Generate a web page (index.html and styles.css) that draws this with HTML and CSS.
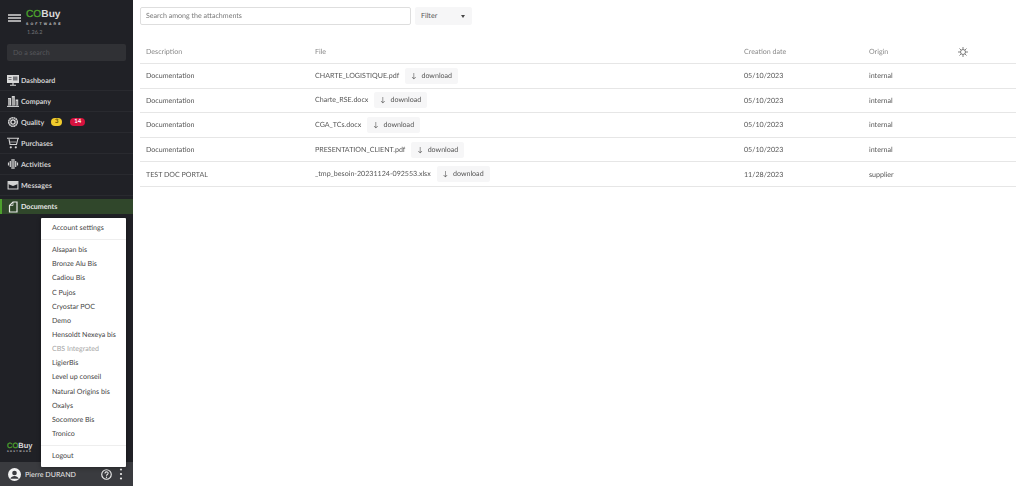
FILE: index.html
```html
<!DOCTYPE html>
<html lang="en">
<head>
    <meta charset="UTF-8">
    <meta name="viewport" content="width=device-width, initial-scale=1.0">
    <title>Documents</title>
    <link rel="stylesheet" href="styles.css">
</head>
<body>
    <div class="app">
        <aside class="sidebar">
            <div class="brand">
                <svg class="burger" viewBox="0 0 13 8" width="13" height="8"><path d="M0 1h13M0 4h13M0 7h13" stroke="#d8d8d8" stroke-width="1.300"/></svg>
                <div class="brand-text">
                    <div class="logo"><span class="logo-co">CO</span>Buy</div>
                    <div class="logo-sub">SOFTWARE</div>
                    <div class="version">1.26.2</div>
                </div>
            </div>
            <div class="side-search">Do a search</div>
            <nav class="side-nav">
                <a class="nav-item">
                    <svg viewBox="0 0 12 12" width="12" height="12"><path d="M0 1h12v8H0z" fill="#dcdcdc"/><path d="M1.500 3h3v1h-3zM1.500 5h3v1h-3zM6 2.500h4.500v4H6z" fill="#77787c"/><path d="M3 11.300h6M6 9v2" stroke="#dcdcdc" stroke-width="1.100"/></svg>
                    Dashboard
                </a>
                <a class="nav-item">
                    <svg viewBox="0 0 12 12" width="12" height="12"><path d="M1 3h3v7.500H1zM4.800 1h3v9.500h-3zM8.600 4.500h2.600v6H8.600z" fill="#d5d5d5"/><path d="M2 4v6M6 2.500V10M9.800 6v4" stroke="#202126" stroke-width=".5"/><path d="M0 11.400h12" stroke="#d5d5d5" stroke-width="1.100"/></svg>
                    Company
                </a>
                <a class="nav-item">
                    <svg viewBox="-1 -1 14 14" width="12" height="12"><circle cx="6" cy="6" r="2.500" fill="none" stroke="#e2e2e2" stroke-width="1.500"/><circle cx="6" cy="6" r="5" fill="none" stroke="#d5d5d5" stroke-width="1.800" stroke-dasharray="2.200 .4"/></svg>
                    Quality
                    <span class="badge badge-yellow">3</span>
                    <span class="badge badge-red">14</span>
                </a>
                <a class="nav-item">
                    <svg viewBox="0 0 12 12" width="12" height="12"><path d="M0 1.200h11.800L10.800 2.200 9.500 7.500H3L2 2.200" fill="none" stroke="#d5d5d5" stroke-width="1.100"/><path d="M2.800 5h6.500" stroke="#d5d5d5" stroke-width=".7"/><circle cx="3.800" cy="10.300" r="1.100" fill="#d5d5d5"/><circle cx="8.800" cy="10.300" r="1.100" fill="#d5d5d5"/></svg>
                    Purchases
                </a>
                <a class="nav-item">
                    <svg viewBox="0 0 12 12" width="12" height="12"><path d="M1.500 4.500v3M3.300 3v6M5.100 1v10M6.900 1v10M8.700 3v6M10.500 4.500v3" stroke="#d5d5d5" stroke-width="1.200"/></svg>
                    Activities
                </a>
                <a class="nav-item">
                    <svg viewBox="0 0 12 12" width="12" height="12"><path d="M1.100 2.500h9.800v7.500H1.100z" fill="none" stroke="#d5d5d5" stroke-width="1.100"/><path d="M1.100 2.500h9.800V5L6 7 1.100 5z" fill="#d5d5d5"/></svg>
                    Messages
                </a>
                <a class="nav-item active">
                    <svg viewBox="0 0 12 12" width="12" height="12"><path d="M2.500 11V4.500L6 1h4v10z" fill="none" stroke="#eee" stroke-width="1.200"/><path d="M6 1v3.500H2.500" fill="none" stroke="#eee" stroke-width=".7"/></svg>
                    Documents
                </a>
            </nav>
            <div class="side-spacer"></div>
            <div class="side-logo">
                <div class="logo logo-small"><span class="logo-co">CO</span>Buy</div>
                <div class="logo-sub logo-sub-small">SOFTWARE</div>
            </div>
            <div class="user-bar">
                <svg class="avatar" viewBox="0 0 14 14" width="13" height="13"><circle cx="7" cy="7" r="7" fill="#f2f2f2"/><circle cx="7" cy="5.400" r="2.500" fill="#3a3b3f"/><path d="M2.500 11.500c.8-2 2.500-3 4.500-3s3.700 1 4.500 3z" fill="#3a3b3f"/></svg>
                <span class="user-name">Pierre DURAND</span>
                <svg class="help" viewBox="0 0 12 12" width="11" height="11"><circle cx="6" cy="6" r="5.200" fill="none" stroke="#eee" stroke-width="1.200"/><path d="M4.300 4.800c0-2.200 3.500-2.200 3.500-.1 0 1.300-1.800 1.300-1.800 2.600" fill="none" stroke="#eee" stroke-width="1.100"/><circle cx="6" cy="9" r=".7" fill="#eee"/></svg>
                <svg class="dots" viewBox="0 0 4 12" width="4" height="12"><circle cx="2" cy="1.500" r="1.100" fill="#eee"/><circle cx="2" cy="6" r="1.100" fill="#eee"/><circle cx="2" cy="10.500" r="1.100" fill="#eee"/></svg>
            </div>
        </aside>

        <div class="user-menu">
            <div class="menu-group">
                <div class="menu-item">Account settings</div>
            </div>
            <div class="menu-group">
                <div class="menu-item">Alsapan bis</div>
                <div class="menu-item">Bronze Alu Bis</div>
                <div class="menu-item">Cadiou Bis</div>
                <div class="menu-item">C Pujos</div>
                <div class="menu-item">Cryostar POC</div>
                <div class="menu-item">Demo</div>
                <div class="menu-item">Hensoldt Nexeya bis</div>
                <div class="menu-item disabled">CBS Integrated</div>
                <div class="menu-item">LigierBis</div>
                <div class="menu-item">Level up conseil</div>
                <div class="menu-item">Natural Origins bis</div>
                <div class="menu-item">Oxalys</div>
                <div class="menu-item">Socomore Bis</div>
                <div class="menu-item">Tronico</div>
            </div>
            <div class="menu-group">
                <div class="menu-item">Logout</div>
            </div>
        </div>

        <main class="main">
            <div class="toolbar">
                <div class="search-box">Search among the attachments</div>
                <div class="filter-select">Filter <span class="caret"></span></div>
            </div>
            <table class="doc-table">
                <thead>
                    <tr>
                        <th class="col-desc">Description</th>
                        <th class="col-file">File</th>
                        <th class="col-date">Creation date</th>
                        <th class="col-origin">Origin</th>
                        <th class="col-gear">
                            <svg viewBox="0 0 12 12" width="10" height="10"><circle cx="6" cy="6" r="3" fill="none" stroke="#666" stroke-width="1"/><path d="M6 0v3M6 9v3M0 6h3M9 6h3M1.800 1.800l2 2M8.200 8.200l2 2M10.200 1.800l-2 2M3.800 8.200l-2 2" stroke="#666" stroke-width="1"/></svg>
                        </th>
                    </tr>
                </thead>
                <tbody>
                    <tr>
                        <td>Documentation</td>
                        <td><span class="file-name">CHARTE_LOGISTIQUE.pdf</span><span class="dl-btn"><span class="dl-arrow">↓</span>download</span></td>
                        <td>05/10/2023</td>
                        <td>internal</td>
                        <td></td>
                    </tr>
                    <tr>
                        <td>Documentation</td>
                        <td><span class="file-name">Charte_RSE.docx</span><span class="dl-btn"><span class="dl-arrow">↓</span>download</span></td>
                        <td>05/10/2023</td>
                        <td>internal</td>
                        <td></td>
                    </tr>
                    <tr>
                        <td>Documentation</td>
                        <td><span class="file-name">CGA_TCs.docx</span><span class="dl-btn"><span class="dl-arrow">↓</span>download</span></td>
                        <td>05/10/2023</td>
                        <td>internal</td>
                        <td></td>
                    </tr>
                    <tr>
                        <td>Documentation</td>
                        <td><span class="file-name">PRESENTATION_CLIENT.pdf</span><span class="dl-btn"><span class="dl-arrow">↓</span>download</span></td>
                        <td>05/10/2023</td>
                        <td>internal</td>
                        <td></td>
                    </tr>
                    <tr>
                        <td>TEST DOC PORTAL</td>
                        <td><span class="file-name">_tmp_besoin-20231124-092553.xlsx</span><span class="dl-btn"><span class="dl-arrow">↓</span>download</span></td>
                        <td>11/28/2023</td>
                        <td>supplier</td>
                        <td></td>
                    </tr>
                </tbody>
            </table>
        </main>
    </div>
</body>
</html>
```

FILE: styles.css
```css
html, body {
    margin: 0;
    height: 100%;
    overflow: hidden;
}
body {
    font-family: Lato, "Open Sans", sans-serif;
    font-size: 7.100px;
    text-rendering: geometricPrecision;
    color: #555;
    background: #fff;
}
.app {
    position: relative;
    display: flex;
    height: 486px;
}
.sidebar {
    width: 133px;
    flex: none;
    display: flex;
    flex-direction: column;
    background: #202126;
    color: #d5d5d5;
}
.brand {
    display: flex;
    align-items: flex-start;
    padding: 9px 0 0 8px;
    height: 35px;
}
.burger {
    margin-top: 5px;
    margin-right: 5px;
}
.logo {
    font-family: "Liberation Sans", sans-serif;
    font-size: 10.200px;
    font-weight: 700;
    line-height: 11px;
    color: #d8d8d8;
}
.logo-co {
    color: #4ea32e;
    font-weight: 400;
    -webkit-text-stroke: .3px #4ea32e;
}
.logo-sub {
    margin-top: 2px;
    font-family: "Liberation Sans", sans-serif;
    font-size: 3.500px;
    font-weight: 700;
    line-height: 5px;
    letter-spacing: 2.100px;
    color: #c8c8c8;
}
.version {
    margin-top: 3px;
    margin-left: 1px;
    font-size: 5.500px;
    line-height: 7px;
    color: #77787c;
}
.side-search {
    margin: 0 7px;
    height: 17px;
    line-height: 17px;
    padding-left: 6px;
    background: #303135;
    border-radius: 2px;
    color: #56575b;
}
.side-nav {
    margin-top: 9px;
    opacity: .99;
}
.nav-item {
    display: flex;
    align-items: center;
    gap: 2px;
    height: 20px;
    padding: 0 0 0 7px;
    border-bottom: 1px solid #2a2b30;
    font-weight: 700;
    font-size: 7.100px;
    color: #d5d5d5;
}
.nav-item:last-child {
    border-bottom: none;
}
.active {
    margin-top: 3px;
    height: 15px;
    padding-left: 5px;
    border-left: 2px solid #4ea32e;
    background: #31482c;
    color: #e8e8e8;
}
.badge {
    margin-left: 5px;
    min-width: 5px;
    height: 8px;
    line-height: 8px;
    padding: 0 3px;
    border-radius: 4px;
    text-align: center;
    font-size: 6px;
}
.badge-yellow {
    background: #f4cf2e;
    color: #5a4a00;
}
.badge-red {
    margin-left: 6px;
    padding: 0 4px;
    background: #d9123f;
    color: #fff;
}
.side-spacer {
    flex: 1;
}
.side-logo {
    padding: 0 0 9px 7px;
}
.logo-small {
    font-size: 7.500px;
    line-height: 8px;
}
.logo-sub-small {
    margin-top: 0;
    font-size: 2.500px;
    line-height: 3px;
    letter-spacing: 1.400px;
}
.user-bar {
    display: flex;
    align-items: center;
    height: 24px;
    padding: 0 10px 0 8px;
    background: #3a3b3f;
    color: #eee;
}
.user-name {
    margin-left: 4px;
    flex: 1;
    opacity: .99;
}
.help {
    margin-right: 7px;
}
.user-menu {
    position: absolute;
    left: 41px;
    top: 218px;
    width: 85px;
    background: #fff;
    box-shadow: 0 1px 4px rgba(0, 0, 0, .4);
    border-radius: 1px;
    color: #444;
}
.menu-group {
    padding: 3px 0 4px;
    border-bottom: 1px solid #eee;
    opacity: .99;
}
.menu-group:last-child {
    border-bottom: none;
}
.menu-item {
    height: 14.150px;
    line-height: 14.150px;
    padding-left: 11px;
    white-space: nowrap;
}
.disabled {
    color: #a5a5a5;
}
.main {
    flex: 1;
    padding: 7px 8px 0 7px;
    opacity: .99;
}
.toolbar {
    display: flex;
    gap: 4px;
}
.search-box {
    width: 264px;
    height: 16px;
    line-height: 16px;
    padding-left: 5px;
    border: 1px solid #dedede;
    border-radius: 2px;
    color: #777;
}
.filter-select {
    position: relative;
    width: 51px;
    height: 18px;
    line-height: 18px;
    padding-left: 6px;
    background: #f6f6f7;
    border-radius: 2px;
}
.caret {
    position: absolute;
    right: 7px;
    top: 8px;
    border-left: 2.500px solid transparent;
    border-right: 2.500px solid transparent;
    border-top: 3px solid #444;
}
.doc-table {
    width: 876px;
    margin-top: 15px;
    border-collapse: collapse;
    table-layout: fixed;
}
.doc-table th {
    height: 23px;
    padding: 0 6px;
    text-align: left;
    font-weight: 400;
    color: #888;
    border-bottom: 1px solid #e6e6e6;
}
.doc-table td {
    height: 23.600px;
    padding: 0 6px;
    color: #555;
    border-bottom: 1px solid #e6e6e6;
    white-space: nowrap;
}
.col-desc { width: 157px; }
.col-file { width: 417px; }
.col-date { width: 113px; }
.col-origin { width: 77px; }
.col-gear svg {
    vertical-align: middle;
}
.dl-btn {
    display: inline-block;
    margin-left: 6px;
    height: 16px;
    line-height: 16px;
    padding: 0 6px;
    background: #f6f6f7;
    border-radius: 2px;
}
.dl-arrow {
    margin-right: 5px;
    font-size: 7px;
}
```
